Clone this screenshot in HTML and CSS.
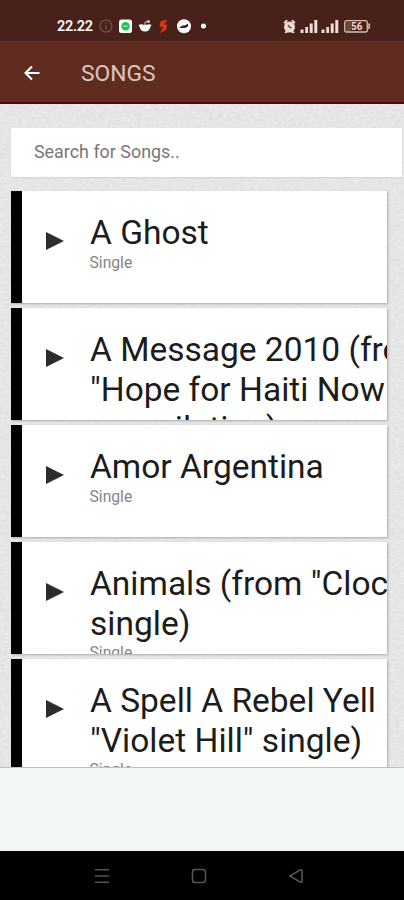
FILE: index.html
```
<!DOCTYPE html>
<html lang="en">
<head>
<meta charset="utf-8">
<title>Songs</title>
<link rel="stylesheet" href="styles.css">
</head>
<body>
<div class="screen">
  <div class="status">
    <span class="clock">22.22</span>
    <svg class="notifications" width="110" height="18" viewBox="0 0 110 18">
      <g fill="none" stroke="#7b554d" stroke-width="1.2"><circle cx="8" cy="9" r="6"/><path d="M8 5.5v1.4M8 8.3v4.2"/></g>
      <rect x="21" y="2.5" width="13" height="13.5" rx="2.5" fill="#fff"/>
      <circle cx="27.500" cy="9.200" r="4.200" fill="#16c94d"/><path d="M25.300 9.200h4.400" stroke="#89e7a3" stroke-width="1.500"/>
      <path d="M40.500 8q3-1.300 5-.3h3q3-1.200 5 .3l-1.300 2.300q-.8 4.200-5.200 4.200t-5.200-4.200z" fill="#fff"/><path d="M47 8V5l3-.5" stroke="#d9c4be" fill="none"/><circle cx="50.500" cy="4.500" r="1.500" fill="#d9c4be"/>
      <path d="M69 3l-6 1.500-1 5 4 .5-3.500 5.500 5.500-3 .5-4.500-3-.5z" fill="#d93b16" stroke="#d93b16" stroke-width=".7"/>
      <circle cx="86" cy="9.200" r="7" fill="#fff"/><path d="M81.500 10.500l3-2h2l3.500-1.700v2.700l-3 1.500h-5.500z" fill="#35221e"/>
      <circle cx="105.500" cy="9" r="2.500" fill="#fff"/>
    </svg>
    <svg class="system" width="90" height="18" viewBox="0 0 90 18">
      <g fill="#efdcd5"><circle cx="7.500" cy="10" r="5.500"/><path d="M1.500 5.500L4 2.700l2 1L3 7zM13.500 5.500L11 2.700l-2 1L12 7zM3.500 14l-1 2 2 .3 1.500-1.500zM11.500 14l1 2-2 .3-1.500-1.500z"/></g>
      <path d="M6 8l2 2.500h1.500" fill="none" stroke="#6b4740" stroke-width="1.300"/>
      <g fill="#efdcd5"><path d="M18.500 12.500h3V16h-3zM23.300 10h2.700v6h-2.700zM27.700 6.500h3V16h-3zM32.300 3h3v13h-3z"/><path d="M39.500 12.500h3V16h-3zM44.300 10h2.700v6h-2.700zM48.700 6.500h3V16h-3zM53.300 3h3v13h-3z"/></g>
      <rect x="62.700" y="3.700" width="22.600" height="11.300" rx="2" fill="none" stroke="#d8bdb4" stroke-width="1.300"/>
      <path d="M64 5h5v9h-5z" fill="#6d4940"/><path d="M86.500 6.500q2 2.800 0 5.500" stroke="#d8bdb4" stroke-width="1.400" fill="none"/>
      <text class="battery" x="69" y="13">56</text>
    </svg>
  </div>
  <header class="toolbar">
    <svg class="back" width="18" height="18" viewBox="0 0 18 18"><path d="M16.500 9H3M9 2.500L2.500 9L9 15.500" fill="none" stroke="#fff" stroke-width="2.100"/></svg>
    <h1>SONGS</h1>
  </header>
  <main class="content">
    <svg class="paper" width="404" height="664" aria-hidden="true">
      <filter id="grain" x="0" y="0" width="100%" height="100%" color-interpolation-filters="sRGB">
        <feTurbulence type="fractalNoise" baseFrequency=".22 .38" numOctaves="2" seed="8"/>
        <feColorMatrix values=".07 0 0 0 .865  .07 0 0 0 .865  .07 0 0 0 .865  0 0 0 0 1"/>
      </filter>
      <rect width="404" height="664" filter="url(#grain)"/>
    </svg>
    <div class="search">Search for Songs..</div>
    <div class="songs">
      <article class="song"><i class="play"></i><div class="info"><h2>A Ghost</h2><p>Single</p></div></article>
      <article class="song"><i class="play"></i><div class="info"><h2>A Message 2010 (from<br>"Hope for Haiti Now<br>compilation)</h2></div></article>
      <article class="song"><i class="play"></i><div class="info"><h2>Amor Argentina</h2><p>Single</p></div></article>
      <article class="song"><i class="play"></i><div class="info"><h2>Animals (from "Clocks"<br>single)</h2><p>Single</p></div></article>
      <article class="song"><i class="play"></i><div class="info"><h2>A Spell A Rebel Yell<br>"Violet Hill" single)</h2><p>Single</p></div></article>
    </div>
  </main>
  <div class="banner"></div>
  <nav class="navbar">
    <svg width="16" height="16" viewBox="0 0 16 16"><path d="M1 1.700h14M1 8h14M1 14.300h14"/></svg>
    <svg width="16" height="16" viewBox="0 0 16 16"><rect x="1.500" y="1.500" width="13" height="13" rx="2.500"/></svg>
    <svg width="16" height="16" viewBox="0 0 16 16"><path d="M1.800 8L12.500 1.800Q14 1.300 14 3v10q0 1.700-1.500 1.200z"/></svg>
  </nav>
</div>
</body>
</html>
```
FILE: styles.css
```
* { box-sizing: border-box; }
body { margin: 0; font-family: Roboto, sans-serif; }
.screen { width: 404px; height: 900px; display: flex; flex-direction: column; overflow: hidden; }
.status { height: 41px; flex: none; background: #49211b; display: flex; align-items: flex-start; padding: 17px 32px 0 57px; }
.clock { width: 43px; color: #fff; font-size: 14.5px; line-height: 19px; font-weight: 600; letter-spacing: -.3px; }
.notifications { flex: none; }
.system { flex: none; margin-left: 74px; }
.battery { font: 700 10px Roboto, sans-serif; fill: #efdcd5; }
.toolbar { height: 63px; flex: none; display: flex; align-items: center; background: #602c1f; border-bottom: 2px solid #5b0508; padding-left: 23px; }
.toolbar h1 { margin: 4px 0 0 40px; color: #dcc6c0; font-size: 22.8px; line-height: 28px; font-weight: 400; }
.back { margin-top: 2px; }
.content { height: 664px; flex: none; position: relative; overflow: hidden; padding: 24px 0 0 11px; border-bottom: 1px solid #bfc2c1; background: #e5e5e5; }
.paper { position: absolute; left: 0; top: 0; }
.search { position: relative; width: 391px; height: 49px; background: #fff; box-shadow: 0 1px 1px #d5d5d5; padding-left: 23px; color: #777; font-size: 17.9px; line-height: 48px; }
.songs { position: relative; width: 376px; margin-top: 14px; display: flex; flex-direction: column; gap: 5px; }
.song { height: 112px; flex: none; overflow: hidden; display: flex; align-items: flex-start; background: #fff; border-left: 11px solid #000; box-shadow: 1px 1px 2px #aaa; }
.play { flex: none; width: 18px; height: 18px; margin: 41px 26px 0 24px; background: #2d2d2d; clip-path: polygon(0 0, 100% 50%, 0 100%); }
.info { padding-top: 22px; white-space: nowrap; }
.info h2 { margin: 0; color: #1c1c1c; font-size: 33.5px; line-height: 39.7px; font-weight: 400; }
.info p { margin: 1px 0 0 -.5px; color: #858585; font-size: 15.7px; line-height: 18px; font-weight: 400; }
.banner { height: 83px; flex: none; background: #f1f7f6; }
.navbar { height: 49px; flex: none; background: #000; display: flex; justify-content: center; align-items: center; gap: 81px; padding-right: 6px; }
.navbar svg { fill: none; stroke: #555; stroke-width: 1.5; }
```
